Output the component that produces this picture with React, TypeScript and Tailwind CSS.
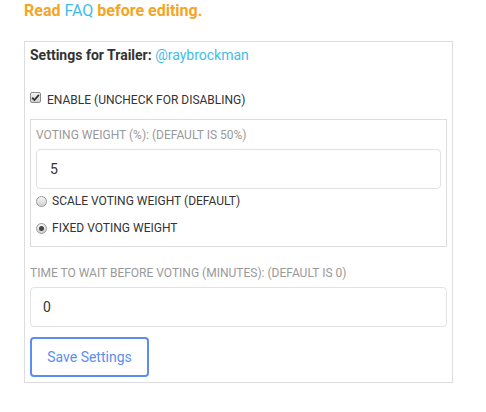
const font = { fontFamily: 'Roboto, "Liberation Sans", sans-serif' }

function FakeCheckbox() {
  return (
    <span className="mt-[2px] flex h-[11px] w-[11px] shrink-0 items-center justify-center rounded-[2px] border border-[#8a8a8a] bg-gradient-to-b from-[#f4f4f4] to-[#cfcfcf]">
      <svg width="9" height="9" viewBox="0 0 8 8" fill="none">
        <path d="M1 4.2 L3.1 6.2 L7 1.6" stroke="#333" strokeWidth="1.6" />
      </svg>
    </span>
  )
}

function FakeRadio({ checked }: { checked?: boolean }) {
  return (
    <span className="flex h-[11px] w-[11px] shrink-0 items-center justify-center rounded-full border border-[#9a9a9a] bg-gradient-to-b from-[#f6f6f6] to-[#d2d2d2]">
      {checked && <span className="h-[5px] w-[5px] rounded-full bg-[#444]" />}
    </span>
  )
}

export default function App() {
  return (
    <div className="min-h-[412px] bg-white pl-6" style={font}>
      <p className="text-base leading-[22px] font-bold text-[#f5a524]">
        Read <span className="font-normal text-[#3fbde9]">FAQ</span> before editing.
      </p>

      <section className="mt-[19px] w-[429px] border border-[#dddddd] px-[5px] pt-[3px] pb-[5px]">
        <h3 className="text-sm leading-5 font-bold text-[#333]">
          Settings for Trailer: <span className="font-normal text-[#3fbde9]">@raybrockman</span>
        </h3>

        <label className="mt-[25px] flex items-start gap-[6px] text-xs leading-5 text-[#333]">
          <FakeCheckbox />
          ENABLE (UNCHECK FOR DISABLING)
        </label>

        <div className="mt-[9px] border border-[#dddddd] px-[5px] pt-[5px] pb-[8px]">
          <div className="text-xs leading-5 text-[#999]">VOTING WEIGHT (%): (DEFAULT IS 50%)</div>
          <div className="mt-1 flex h-10 items-center rounded border border-[#e2e2e2] px-[13px] text-sm text-[#333]">5</div>
          <label className="mt-[2px] flex items-center gap-[5px] text-xs leading-5 text-[#333]">
            <FakeRadio />
            SCALE VOTING WEIGHT (DEFAULT)
          </label>
          <label className="mt-[7px] flex items-center gap-[5px] text-xs leading-5 text-[#333]">
            <FakeRadio checked />
            FIXED VOTING WEIGHT
          </label>
        </div>

        <div className="mt-4 text-xs leading-5 text-[#999]">TIME TO WAIT BEFORE VOTING (MINUTES): (DEFAULT IS 0)</div>
        <div className="mt-1 flex h-10 items-center rounded border border-[#e2e2e2] px-3 text-sm text-[#333]">0</div>

        <button className="mt-[10px] h-10 w-[119px] rounded border-2 border-[#5b8ef0] text-sm text-[#5b8ef0]">
          Save Settings
        </button>
      </section>
    </div>
  )
}
